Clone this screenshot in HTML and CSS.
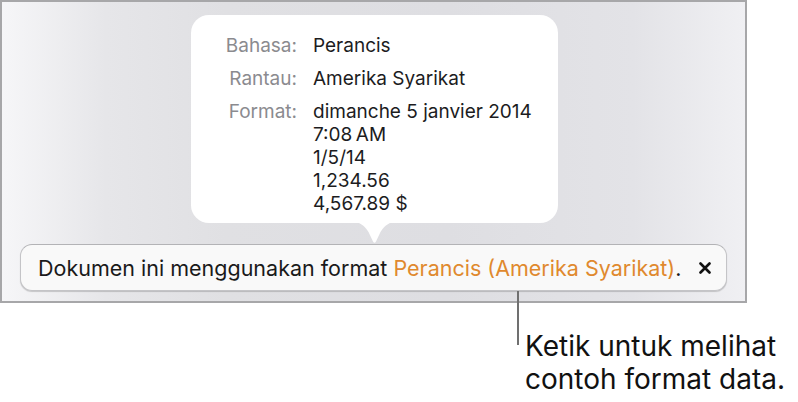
FILE: index.html
```html
<!DOCTYPE html>
<html lang="ms">
<head>
    <meta charset="UTF-8">
    <meta name="viewport" content="width=device-width, initial-scale=1.0">
    <title>Format dokumen</title>
    <link rel="stylesheet" href="styles.css">
</head>
<body>
    <div class="frame">
        <div class="popover">
            <div class="info-row">
                <span class="info-label">Bahasa:</span>
                <span class="info-value">Perancis</span>
            </div>
            <div class="info-row">
                <span class="info-label">Rantau:</span>
                <span class="info-value">Amerika Syarikat</span>
            </div>
            <div class="info-row">
                <span class="info-label">Format:</span>
                <span class="info-value">dimanche 5 janvier 2014<br>7:08&#8201;AM<br>1/5/14<br>1,234.56<br>4,567.89 $</span>
            </div>
            <!-- anak panah popover -->
            <svg class="popover-arrow" width="45" height="22" viewBox="0 0 45 22">
                <path d="M0,0 C8,0 12,3 16.5,10 L21,19.5 Q22.5,22 24,19.5 L28.5,10 C33,3 37,0 45,0 Z" fill="#fff"/>
            </svg>
        </div>

        <div class="banner">
            <span class="banner-text">Dokumen ini menggunakan format <span class="accent">Perancis (Amerika Syarikat)</span>.</span>
            <button class="banner-close" aria-label="Tutup">
                <svg width="12" height="12" viewBox="0 0 12 12">
                    <path d="M1.5,1.5 L10.5,10.5 M10.5,1.5 L1.5,10.5" stroke="#111" stroke-width="2.6" stroke-linecap="round"/>
                </svg>
            </button>
        </div>
    </div>

    <div class="callout">
        <div class="callout-line"></div>
        <p class="callout-text">Ketik untuk melihat<br>contoh format data.</p>
    </div>
</body>
</html>
```

FILE: styles.css
```css
body {
    margin: 0;
    background-color: #fff;
    font-family: "Inter", "Liberation Sans", sans-serif;
    color: #1c1c1e;
}

.frame {
    box-sizing: border-box;
    width: 747px;
    height: 303px;
    border: 2px solid #a7a7a9;
    padding-top: 13px;
    background: linear-gradient(to right, #f6f6f8 0%, #e6e6e9 14%, #e0e0e3 30%, #dedee2 60%, #e3e3e7 85%, #f0f0f3 100%);
}

/* popover putih */
.popover {
    position: relative;
    box-sizing: border-box;
    width: 367px;
    height: 208px;
    margin-left: 189px;
    padding: 19px 0 0 20px;
    background-color: #fff;
    border-radius: 18px;
    display: flex;
    flex-direction: column;
    gap: 10px;
    font-size: 19px;
    line-height: 23px;
}

.info-row {
    display: grid;
    grid-template-columns: 86px 1fr;
    column-gap: 16px;
}

.info-label {
    text-align: right;
    color: #8b8b8f;
}

.info-value {
    color: #1c1c1e;
}

.popover-arrow {
    position: absolute;
    left: 161px;
    top: 207px;
    display: block;
}

/* bar notis */
.banner {
    box-sizing: border-box;
    width: 707px;
    height: 47px;
    margin: 21px 0 0 18px;
    padding: 0 15px 0 17px;
    display: flex;
    align-items: center;
    background-color: #f9f9f9;
    border: 1px solid #c4c4c7;
    border-top-color: #b3b3b6;
    border-radius: 12px;
    box-shadow: 0 1px 1px rgba(0, 0, 0, 0.18);
    font-size: 21.5px;
    color: #1a1a1a;
}

.accent {
    color: #e0892e;
}

.banner-close {
    margin-left: auto;
    padding: 0;
    border: none;
    background: transparent;
    display: flex;
    cursor: pointer;
}

/* keterangan di bawah */
.callout {
    position: relative;
    display: flex;
    align-items: flex-start;
    margin: -12px 0 0 517px;
}

.callout-line {
    width: 2px;
    height: 54px;
    background-color: #707070;
}

.callout-text {
    margin: 39px 0 0 6px;
    font-size: 28px;
    line-height: 33px;
    color: #111;
}
```
